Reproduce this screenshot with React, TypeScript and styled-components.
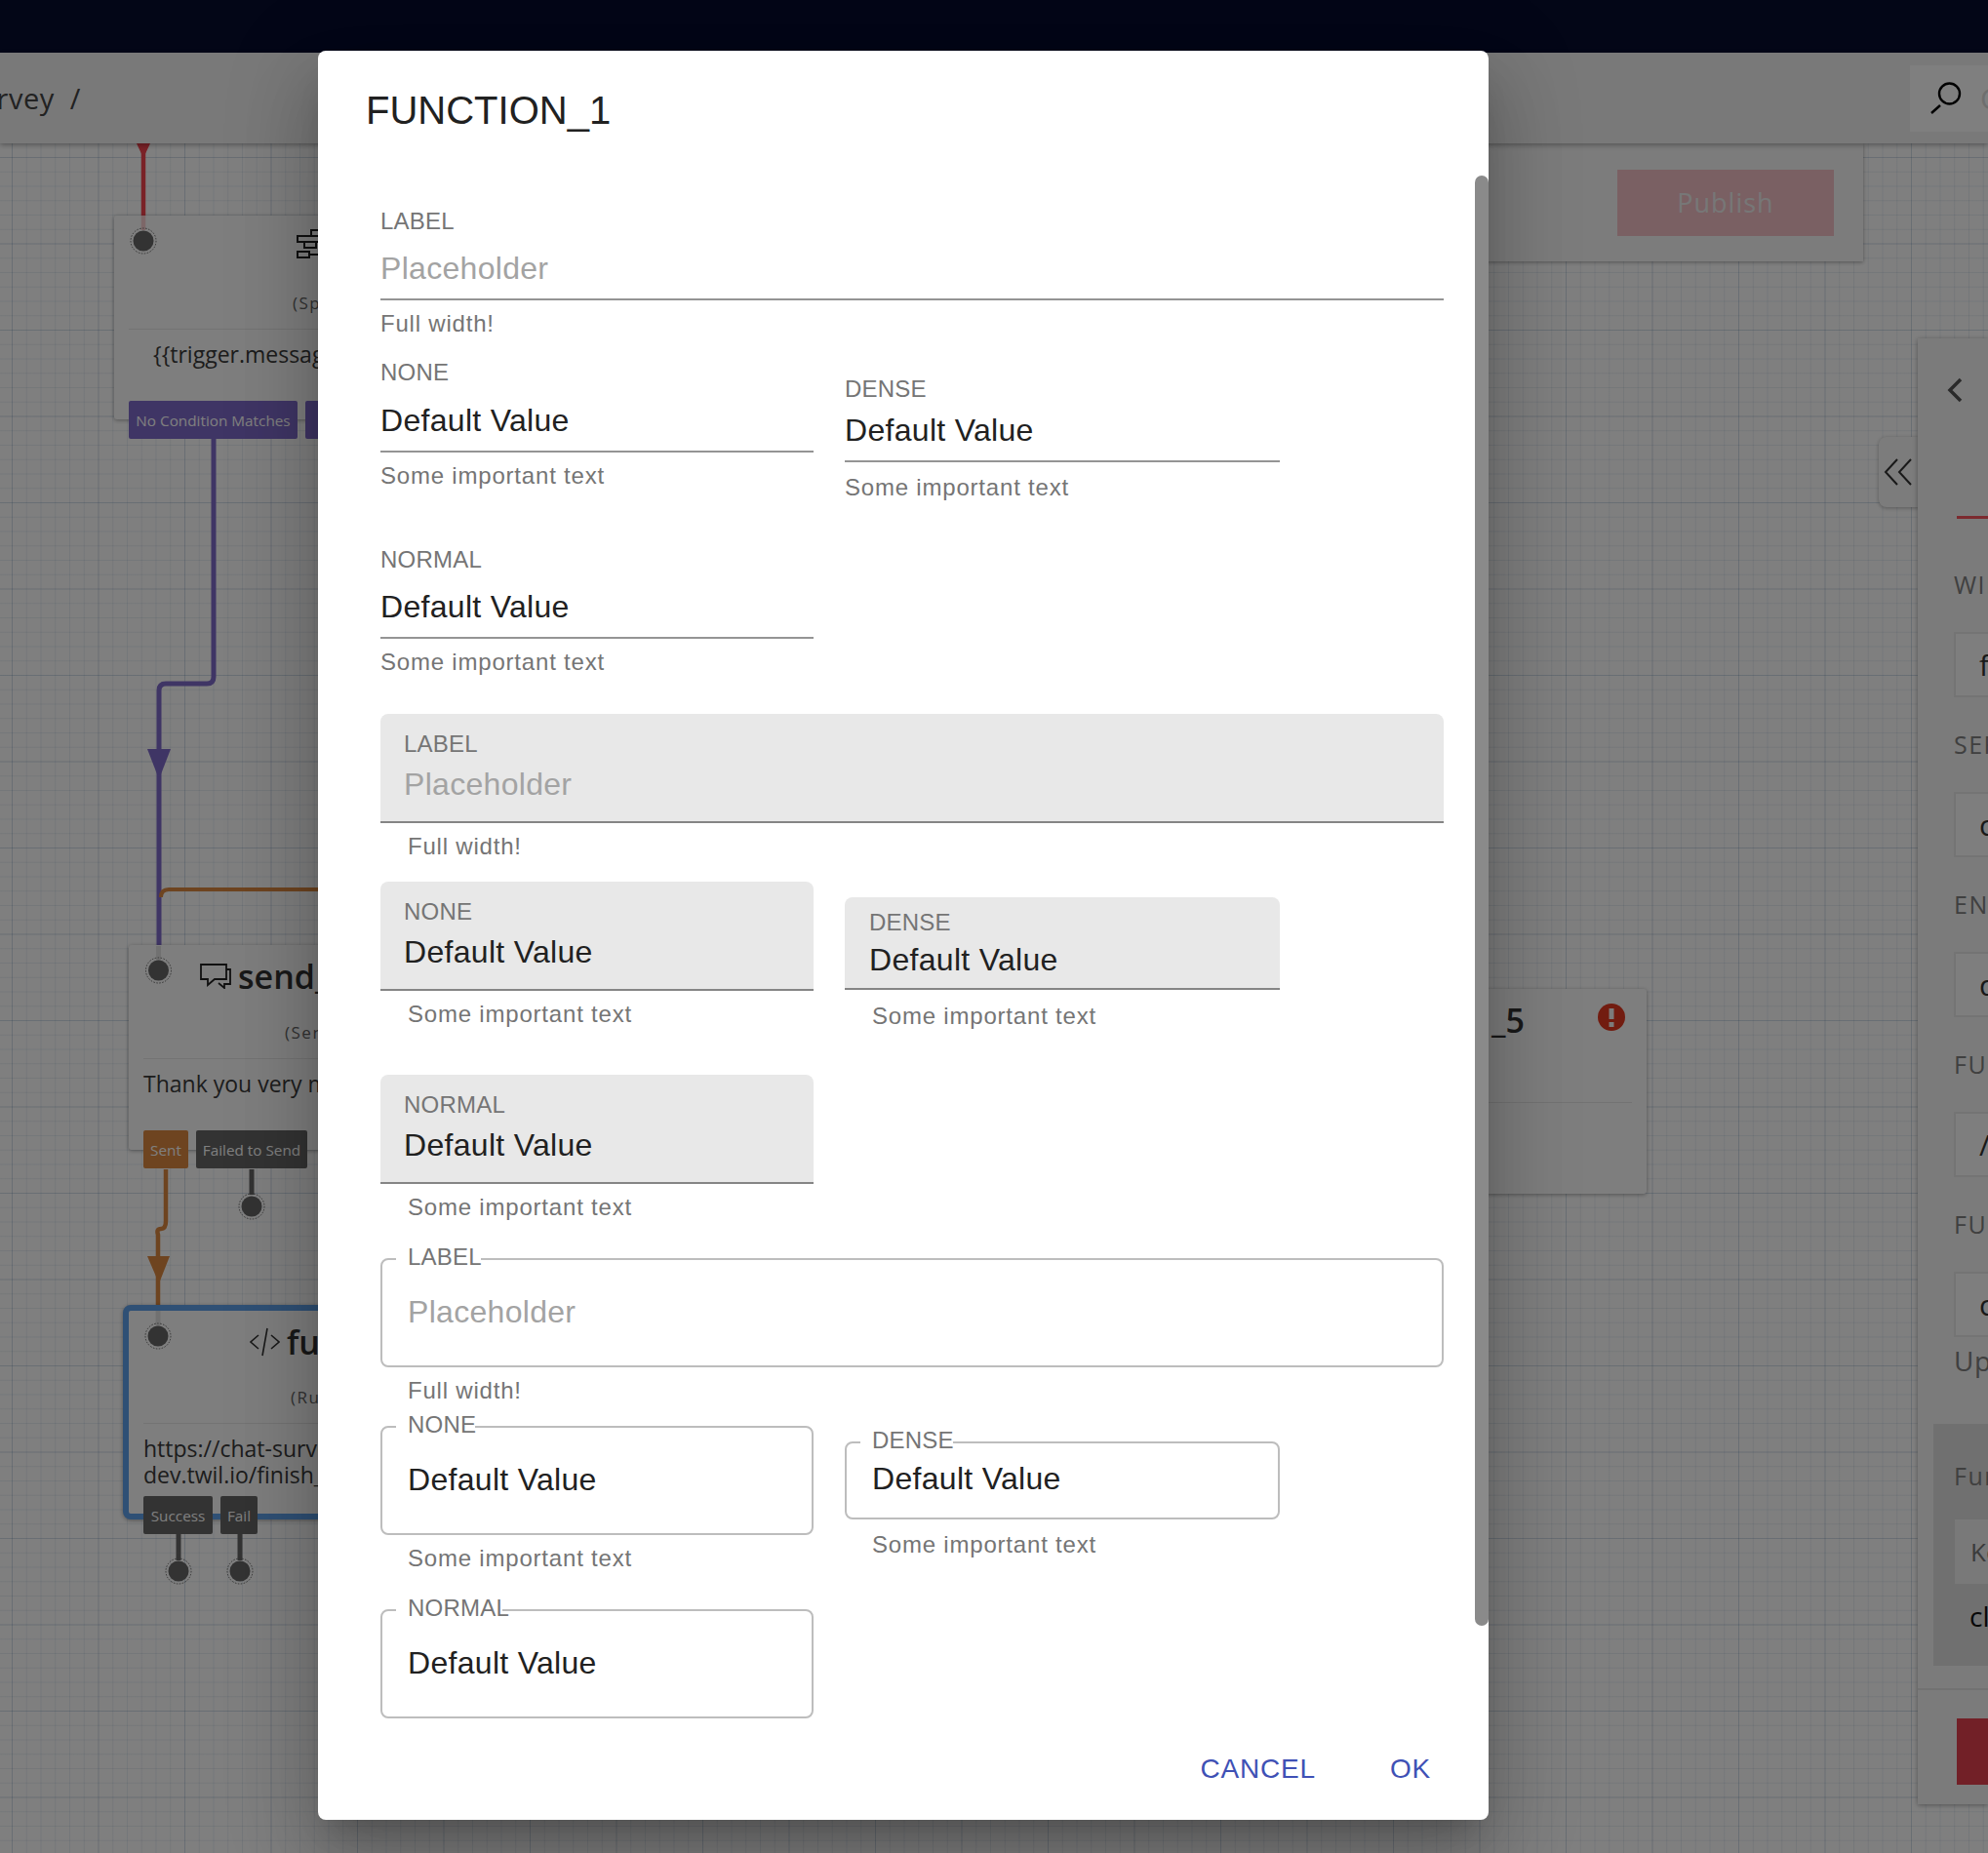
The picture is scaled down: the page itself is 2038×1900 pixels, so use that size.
import styled, { createGlobalStyle, css } from "styled-components";

const CANVAS_TOP = 147;

const GlobalStyle = createGlobalStyle`
  html, body {
    margin: 0;
    padding: 0;
    background: #ffffff;
  }
  * {
    box-sizing: border-box;
  }
`;

// ===== page behind the dialog =====

const Page = styled.div`
  position: relative;
  width: 2038px;
  height: 1900px;
  overflow: hidden;
  display: flex;
  flex-direction: column;
  font-family: "Open Sans", "Liberation Sans", sans-serif;
  color: #3a3a3a;
`;

const TopBar = styled.div`
  flex: 0 0 54px;
  background: #060c2e;
`;

const Header = styled.header`
  position: relative;
  z-index: 3;
  flex: 0 0 93px;
  display: flex;
  align-items: center;
  justify-content: space-between;
  background: #f2f2f2;
  box-shadow: 0 2px 5px rgba(0, 0, 0, 0.3);
`;

const Crumb = styled.div`
  margin-left: -36px;
  font-size: 29px;
  letter-spacing: 0.5px;
  white-space: pre;
  color: #444444;
`;

const SearchBox = styled.div`
  width: 80px;
  height: 68px;
  flex: none;
  display: flex;
  align-items: center;
  padding-left: 21px;
  gap: 19px;
  background: #ffffff;
  font-size: 30px;
  color: #dddddd;
  overflow: hidden;

  svg {
    flex: none;
  }
`;

const Canvas = styled.main`
  position: relative;
  flex: 1;
  background-color: #ffffff;
  background-image: linear-gradient(rgba(90, 130, 170, 0.17) 1px, transparent 1px),
    linear-gradient(90deg, rgba(90, 130, 170, 0.17) 1px, transparent 1px),
    linear-gradient(rgba(90, 130, 170, 0.12) 1px, transparent 1px),
    linear-gradient(90deg, rgba(90, 130, 170, 0.12) 1px, transparent 1px);
  background-size: 88.5px 88.5px, 88.5px 88.5px, 14.75px 14.75px, 14.75px 14.75px;
  background-position: 12px 14px, 12px 14px, 12px 14px, 12px 14px;
`;

const Wires = styled.svg`
  position: absolute;
  inset: 0;
  z-index: 1;
`;

const WiresOver = styled(Wires)`
  z-index: 3;
`;

const FlowNode = styled.div<{ $x: number; $y: number; $w: number; $h: number; $selected?: boolean }>`
  position: absolute;
  z-index: 2;
  left: ${({ $x }) => $x}px;
  top: ${({ $y }) => $y - CANVAS_TOP}px;
  width: ${({ $w }) => $w}px;
  height: ${({ $h }) => $h}px;
  background: #fdfdfd;
  box-shadow: 0 1px 4px rgba(0, 0, 0, 0.35);
  border-radius: 3px;

  ${({ $selected }) =>
    $selected &&
    css`
      border: 6px solid #5fa0ea;
      border-radius: 8px;
    `}
`;

const NodeHead = styled.div<{ $pad: number; $height: number }>`
  display: flex;
  align-items: center;
  gap: 7px;
  height: ${({ $height }) => $height}px;
  padding-left: ${({ $pad }) => $pad}px;
  font-size: 34px;
  font-weight: 600;
  color: #333333;
  white-space: nowrap;
`;

const NodeSub = styled.div<{ $pad: number; $top: number }>`
  height: 38px;
  margin-top: ${({ $top }) => $top}px;
  padding-left: ${({ $pad }) => $pad}px;
  font-size: 17px;
  letter-spacing: 1.5px;
  color: #666666;
  white-space: nowrap;
`;

const NodeRule = styled.div<{ $left: number; $right?: number }>`
  height: 1px;
  margin-left: ${({ $left }) => $left}px;
  margin-right: ${({ $right }) => $right ?? 0}px;
  background: #e6e6e6;
`;

const NodeBody = styled.div<{ $left: number }>`
  padding: 12px 0 0 ${({ $left }) => $left}px;
  font-size: 23px;
  line-height: 27px;
  color: #3a3a3a;
  white-space: nowrap;
`;

const TagRow = styled.div<{ $left: number; $top: number }>`
  position: absolute;
  left: ${({ $left }) => $left}px;
  top: ${({ $top }) => $top}px;
  display: flex;
  gap: 8px;
`;

const Tag = styled.div<{ $bg: string; $w: number }>`
  width: ${({ $w }) => $w}px;
  height: 39px;
  flex: none;
  display: flex;
  align-items: center;
  justify-content: center;
  border-radius: 2px;
  background: ${({ $bg }) => $bg};
  font-size: 15.3px;
  color: #ffffff;
  white-space: nowrap;
  overflow: hidden;
`;

const ErrorBadge = styled.svg`
  position: absolute;
  right: 22px;
  top: 15px;
`;

const PublishPanel = styled.div`
  position: absolute;
  z-index: 2;
  right: 128px;
  top: 0;
  width: 500px;
  height: 121px;
  display: flex;
  align-items: center;
  justify-content: flex-end;
  padding-right: 30px;
  background: #f8f8f8;
  box-shadow: 0 1px 4px rgba(0, 0, 0, 0.35);
`;

const PublishButton = styled.div`
  width: 222px;
  height: 68px;
  display: flex;
  align-items: center;
  justify-content: center;
  background: #f4c0c6;
  color: #efefef;
  font-size: 27px;
  letter-spacing: 1px;
`;

const CollapseTab = styled.div`
  position: absolute;
  z-index: 2;
  left: 1926px;
  top: ${448 - CANVAS_TOP}px;
  width: 42px;
  height: 72px;
  display: flex;
  align-items: center;
  padding-left: 5px;
  background: #f8f8f8;
  border-radius: 8px 0 0 8px;
  box-shadow: 0 1px 4px rgba(0, 0, 0, 0.3);
`;

const SidePanel = styled.aside`
  position: absolute;
  z-index: 3;
  left: 1966px;
  top: ${347 - CANVAS_TOP}px;
  width: 72px;
  height: 1503px;
  display: flex;
  flex-direction: column;
  background: #f6f6f6;
  box-shadow: 0 1px 5px rgba(0, 0, 0, 0.35);
  overflow: hidden;
`;

const BackRow = styled.div`
  height: 182px;
  padding: 40px 0 0 30px;
`;

const TabLine = styled.div`
  height: 3px;
  margin: 0 0 0 40px;
  background: #f8545e;
`;

const PanelFields = styled.div`
  padding: 49px 0 0 37px;
`;

const PanelLabel = styled.div<{ $gap?: number }>`
  height: 36px;
  line-height: 36px;
  font-size: 25px;
  letter-spacing: 1.5px;
  color: #808080;
  white-space: nowrap;
  margin-bottom: ${({ $gap }) => $gap ?? 31}px;
`;

const PanelInput = styled.div`
  width: 80px;
  height: 67px;
  margin-bottom: 30px;
  padding-left: 24px;
  display: flex;
  align-items: center;
  border: 2px solid #e9e9e9;
  background: #fcfcfc;
  font-size: 30px;
  color: #333333;
`;

const PanelHint = styled(PanelLabel)`
  margin: -24px 0 0;
  letter-spacing: 0.5px;
  font-size: 28px;
`;

const FunctionBox = styled.div`
  margin: 47px 0 0 16px;
  height: 248px;
  padding: 35px 0 0 21px;
  background: #e0e0e0;
`;

const KeyBox = styled.div`
  height: 66px;
  margin: 27px 0 14px 1px;
  padding-left: 16px;
  display: flex;
  align-items: center;
  background: #f2f2f2;
  font-size: 26px;
  color: #777777;
`;

const FunctionValue = styled.div`
  padding-left: 16px;
  font-size: 28px;
  color: #111111;
`;

const PanelFooter = styled.div`
  margin-top: 23px;
  border-top: 2px solid #e4e4e4;
  padding: 29px 0 0 40px;
`;

const DeleteButton = styled.div`
  height: 68px;
  background: #e5404e;
`;

// ===== dialog =====

const Backdrop = styled.div`
  position: absolute;
  inset: 0;
  z-index: 10;
  padding: 52px 0 0 326px;
  background: rgba(0, 0, 0, 0.5);
`;

const Dialog = styled.div`
  position: relative;
  width: 1200px;
  height: 1814px;
  display: flex;
  flex-direction: column;
  background: #ffffff;
  border-radius: 8px;
  box-shadow: 0 22px 30px -14px rgba(0, 0, 0, 0.2), 0 48px 76px 6px rgba(0, 0, 0, 0.14),
    0 18px 92px 16px rgba(0, 0, 0, 0.12);
  font-family: "Liberation Sans", Arial, sans-serif;
`;

const ScrollThumb = styled.div`
  position: absolute;
  right: 0;
  top: 128px;
  width: 14px;
  height: 1487px;
  border-radius: 7px;
  background: #8a8a8a;
`;

const DialogTitle = styled.h2`
  margin: 0;
  padding: 37px 0 0 49px;
  font-size: 40px;
  line-height: 48px;
  font-weight: 400;
  color: #212121;
`;

const DialogBody = styled.div`
  flex: 1;
  padding: 76px 0 0 64px;
`;

const FieldRow = styled.div<{ $top: number }>`
  display: flex;
  align-items: flex-start;
  gap: 32px;
  margin-top: ${({ $top }) => $top}px;
`;

const FieldRoot = styled.div<{ $width: number; $top?: number }>`
  width: ${({ $width }) => $width}px;
  margin-top: ${({ $top }) => $top ?? 0}px;
  flex: none;
`;

const StandardLabel = styled.div`
  height: 28px;
  line-height: 28px;
  font-size: 24px;
  letter-spacing: 0.22px;
  color: #757575;
`;

const ValueText = styled.div<{ $empty?: boolean }>`
  height: 38px;
  line-height: 38px;
  font-size: 32px;
  letter-spacing: 0.3px;
  color: ${({ $empty }) => ($empty ? "#a3a3a3" : "#212121")};
`;

const StandardInput = styled.div<{ $top: number }>`
  margin-top: ${({ $top }) => $top}px;
  padding-bottom: 12px;
  border-bottom: 2px solid #949494;
`;

const FilledBox = styled.div<{ $dense?: boolean }>`
  padding: ${({ $dense }) => ($dense ? "12px 0 10px 25px" : "17px 0 19px 24px")};
  background: #e8e8e8;
  border-radius: 8px 8px 0 0;
  border-bottom: 2px solid #858585;
`;

const FilledValue = styled.div<{ $dense?: boolean }>`
  margin-top: ${({ $dense }) => ($dense ? 5 : 8)}px;
`;

const OutlinedBox = styled.div<{ $dense?: boolean }>`
  position: relative;
  height: ${({ $dense }) => ($dense ? 80 : 112)}px;
  padding: ${({ $dense }) => ($dense ? "17px" : "34px")} 0 0 26px;
  border: 2px solid #bdbdbd;
  border-radius: 8px;
`;

const OutlineNotch = styled.span<{ $width: number }>`
  position: absolute;
  left: 14px;
  top: -2px;
  width: ${({ $width }) => $width}px;
  height: 2px;
  background: #ffffff;
`;

const OutlineLabel = styled(StandardLabel)`
  position: absolute;
  left: 26px;
  top: -17px;
`;

const HelperText = styled.div<{ $inset?: boolean; $top: number }>`
  height: 28px;
  line-height: 28px;
  margin-top: ${({ $top }) => $top}px;
  padding-left: ${({ $inset }) => ($inset ? 28 : 0)}px;
  font-size: 24px;
  letter-spacing: 0.8px;
  color: #757575;
`;

const DialogActions = styled.div`
  display: flex;
  justify-content: flex-end;
  gap: 76px;
  padding: 0 59px 36px 0;
`;

const ActionButton = styled.div`
  font-size: 28px;
  line-height: 32px;
  letter-spacing: 0.8px;
  color: #3f51b5;
`;

// ===== field helpers =====

type FieldProps = {
  label: string;
  value?: string;
  placeholder?: string;
  helper: string;
  width: number;
  top?: number;
};

function StandardField({
  label,
  value,
  placeholder,
  helper,
  width,
  top,
  valueTop,
  helperTop,
}: FieldProps & { valueTop: number; helperTop: number }) {
  return (
    <FieldRoot $width={width} $top={top}>
      <StandardLabel>{label}</StandardLabel>
      <StandardInput $top={valueTop}>
        <ValueText $empty={!value}>{value ?? placeholder}</ValueText>
      </StandardInput>
      <HelperText $top={helperTop}>{helper}</HelperText>
    </FieldRoot>
  );
}

function FilledField({
  label,
  value,
  placeholder,
  helper,
  width,
  top,
  dense,
}: FieldProps & { dense?: boolean }) {
  return (
    <FieldRoot $width={width} $top={top}>
      <FilledBox $dense={dense}>
        <StandardLabel>{label}</StandardLabel>
        <FilledValue $dense={dense}>
          <ValueText $empty={!value}>{value ?? placeholder}</ValueText>
        </FilledValue>
      </FilledBox>
      <HelperText $inset $top={dense ? 13 : 10}>
        {helper}
      </HelperText>
    </FieldRoot>
  );
}

function OutlinedField({
  label,
  value,
  placeholder,
  helper,
  width,
  top,
  dense,
  notch,
  helperTop,
}: Omit<FieldProps, "helper"> & {
  helper?: string;
  dense?: boolean;
  notch: number;
  helperTop?: number;
}) {
  return (
    <FieldRoot $width={width} $top={top}>
      <OutlinedBox $dense={dense}>
        <OutlineNotch $width={notch} />
        <OutlineLabel>{label}</OutlineLabel>
        <ValueText $empty={!value}>{value ?? placeholder}</ValueText>
      </OutlinedBox>
      {helper && (
        <HelperText $inset $top={helperTop ?? 10}>
          {helper}
        </HelperText>
      )}
    </FieldRoot>
  );
}

// ===== drawings =====

function SearchGlyph() {
  return (
    <svg width="32" height="33" viewBox="0 0 32 33" fill="none" stroke="#000" strokeWidth="2.4">
      <circle cx="19.5" cy="12" r="10.5" />
      <path d="M1 32l9-8" />
    </svg>
  );
}

function SplitGlyph() {
  return (
    <svg width="28" height="32" viewBox="0 0 28 32" fill="none" stroke="#222" strokeWidth="2">
      <path d="M15 1h13v6H15zM1 7h27v6H1zM8 13h12v6H8zM1 23h12v6H1zM13 26h15" />
    </svg>
  );
}

function MessageGlyph() {
  return (
    <svg width="32" height="26" viewBox="0 0 32 26" fill="none" stroke="#222" strokeWidth="1.8">
      <path d="M1 1h26v15H15l-7 6v-6H1z" />
      <path d="M27 6h4v15h-6v4l-6-5" />
    </svg>
  );
}

function CodeGlyph() {
  return (
    <svg width="31" height="30" viewBox="0 0 31 30" fill="none" stroke="#333" strokeWidth="1.6">
      <path d="M9 8L1 15l8 7M22 8l8 7-8 7M18 1l-5 28" />
    </svg>
  );
}

function Chevron() {
  return (
    <svg width="16" height="26" viewBox="0 0 16 26" fill="none" stroke="#555" strokeWidth="3.5">
      <path d="M14 2L3 13l11 11" />
    </svg>
  );
}

function DoubleChevron() {
  return (
    <svg width="30" height="30" viewBox="0 0 30 30" fill="none" stroke="#333" strokeWidth="2">
      <path d="M14 2L2 15l12 13M28 2L16 15l12 13" />
    </svg>
  );
}

function Port({ x, y }: { x: number; y: number }) {
  return (
    <g>
      <circle cx={x} cy={y} r="13" fill="none" stroke="#666" strokeWidth="1" strokeDasharray="1.5 1.5" />
      <circle cx={x} cy={y} r="10.5" fill="#666666" />
    </g>
  );
}

const PURPLE = "#7e6aca";
const ORANGE = "#dd8840";
const RED = "#f4444f";
const DARK = "#666666";

function WiresBelow() {
  return (
    <Wires width="2038" height="1753" viewBox={`0 ${CANVAS_TOP} 2038 1753`} fill="none">
      <path d="M147 155V222" stroke={RED} strokeWidth="4.5" />
      <path d="M140 147h14l-7 15z" fill={RED} />
      <path d="M219 450V694q0 7-7 7h-42q-7 0-7 7V972" stroke={PURPLE} strokeWidth="5" />
      <path d="M151 768h24l-12 31z" fill={PURPLE} />
      <path d="M165 920q0-8 8-8H330" stroke={ORANGE} strokeWidth="4" />
      <path d="M170 1199V1252q0 8-5 8t-3 6V1340" stroke={ORANGE} strokeWidth="4.5" />
      <path d="M151 1288h23l-11 28z" fill={ORANGE} />
      <path d="M258 1199V1225" stroke={DARK} strokeWidth="5" />
      <path d="M183 1572V1600M246 1572V1600" stroke={DARK} strokeWidth="5" />
      <Port x={258} y={1237} />
      <Port x={183} y={1611} />
      <Port x={246} y={1611} />
    </Wires>
  );
}

function WiresAbove() {
  return (
    <WiresOver width="2038" height="1753" viewBox={`0 ${CANVAS_TOP} 2038 1753`} fill="none">
      <path d="M147 221V236" stroke={RED} strokeWidth="4.5" opacity="0.25" />
      <path d="M162.5 970V986M162 1344V1360" stroke="#999" strokeWidth="5" opacity="0.25" />
      <Port x={147} y={247} />
      <Port x={162.5} y={995} />
      <Port x={162} y={1370} />
    </WiresOver>
  );
}

export default function App() {
  return (
    <Page>
      <GlobalStyle />
      <TopBar />
      <Header>
        <Crumb>survey  /</Crumb>
        <SearchBox>
          <SearchGlyph />C
        </SearchBox>
      </Header>

      <Canvas>
        <WiresBelow />

        <FlowNode $x={117} $y={221} $w={420} $h={209}>
          <NodeHead $pad={187} $height={60}>
            <SplitGlyph />
          </NodeHead>
          <NodeSub $pad={183} $top={18}>
            (Split Based On...)
          </NodeSub>
          <NodeRule $left={15} />
          <NodeBody $left={40}>{"{{trigger.message.Body}}"}</NodeBody>
          <TagRow $left={15} $top={190}>
            <Tag $bg={PURPLE} $w={173}>No Condition Matches</Tag>
            <Tag $bg={PURPLE} $w={120}>If value</Tag>
          </TagRow>
        </FlowNode>

        <FlowNode $x={132} $y={969} $w={420} $h={210}>
          <NodeHead $pad={73} $height={64}>
            <MessageGlyph />
            send_
          </NodeHead>
          <NodeSub $pad={160} $top={14}>
            (Send Message)
          </NodeSub>
          <NodeRule $left={15} />
          <NodeBody $left={15}>Thank you very much</NodeBody>
          <TagRow $left={15} $top={190}>
            <Tag $bg={ORANGE} $w={46}>Sent</Tag>
            <Tag $bg={DARK} $w={114}>Failed to Send</Tag>
          </TagRow>
        </FlowNode>

        <FlowNode $x={126} $y={1338} $w={430} $h={220} $selected>
          <NodeHead $pad={124} $height={64}>
            <CodeGlyph />
            fu
          </NodeHead>
          <NodeSub $pad={166} $top={13}>
            (Run Function)
          </NodeSub>
          <NodeRule $left={15} />
          <NodeBody $left={15}>
            https://chat-survey-
            <br />
            dev.twil.io/finish_
          </NodeBody>
          <TagRow $left={15} $top={190}>
            <Tag $bg={DARK} $w={71}>Success</Tag>
            <Tag $bg={DARK} $w={38}>Fail</Tag>
          </TagRow>
        </FlowNode>

        <FlowNode $x={1300} $y={1014} $w={388} $h={210}>
          <NodeHead $pad={229} $height={64}>
            _5
          </NodeHead>
          <NodeSub $pad={80} $top={14}>
            (Run)
          </NodeSub>
          <NodeRule $left={15} $right={15} />
          <ErrorBadge width="28" height="28" viewBox="0 0 28 28">
            <circle cx="14" cy="14" r="14" fill="#e43820" />
            <path d="M11.5 5h5v11h-5zM11.5 19h5v5h-5z" fill="#f8f8f8" />
          </ErrorBadge>
        </FlowNode>

        <WiresAbove />

        <PublishPanel>
          <PublishButton>Publish</PublishButton>
        </PublishPanel>

        <CollapseTab>
          <DoubleChevron />
        </CollapseTab>

        <SidePanel>
          <BackRow>
            <Chevron />
          </BackRow>
          <TabLine />
          <PanelFields>
            <PanelLabel>WIDGET</PanelLabel>
            <PanelInput>f</PanelInput>
            <PanelLabel>SERVICE</PanelLabel>
            <PanelInput>c</PanelInput>
            <PanelLabel>ENV</PanelLabel>
            <PanelInput>d</PanelInput>
            <PanelLabel>FUNCTION</PanelLabel>
            <PanelInput>/</PanelInput>
            <PanelLabel>FUNCTION</PanelLabel>
            <PanelInput>c</PanelInput>
            <PanelHint>Update</PanelHint>
          </PanelFields>
          <FunctionBox>
            <PanelLabel $gap={0}>Function</PanelLabel>
            <KeyBox>Key</KeyBox>
            <FunctionValue>cl</FunctionValue>
          </FunctionBox>
          <PanelFooter>
            <DeleteButton />
          </PanelFooter>
        </SidePanel>
      </Canvas>

      <Backdrop>
        <Dialog>
          <ScrollThumb />
          <DialogTitle>FUNCTION_1</DialogTitle>
          <DialogBody>
            <StandardField
              label="LABEL"
              placeholder="Placeholder"
              helper="Full width!"
              width={1090}
              valueTop={15}
              helperTop={10}
            />
            <FieldRow $top={22}>
              <StandardField
                label="NONE"
                value="Default Value"
                helper="Some important text"
                width={444}
                valueTop={16}
                helperTop={10}
              />
              <StandardField
                label="DENSE"
                value="Default Value"
                helper="Some important text"
                width={446}
                top={17}
                valueTop={9}
                helperTop={12}
              />
            </FieldRow>
            <StandardField
              label="NORMAL"
              value="Default Value"
              helper="Some important text"
              width={444}
              top={46}
              valueTop={15}
              helperTop={10}
            />

            <FilledField
              label="LABEL"
              placeholder="Placeholder"
              helper="Full width!"
              width={1090}
              top={39}
            />
            <FieldRow $top={22}>
              <FilledField
                label="NONE"
                value="Default Value"
                helper="Some important text"
                width={444}
              />
              <FilledField
                label="DENSE"
                value="Default Value"
                helper="Some important text"
                width={446}
                top={16}
                dense
              />
            </FieldRow>
            <FilledField
              label="NORMAL"
              value="Default Value"
              helper="Some important text"
              width={444}
              top={46}
            />

            <OutlinedField
              label="LABEL"
              placeholder="Placeholder"
              helper="Full width!"
              width={1090}
              top={38}
              notch={87}
            />
            <FieldRow $top={22}>
              <OutlinedField
                label="NONE"
                value="Default Value"
                helper="Some important text"
                width={444}
                notch={81}
              />
              <OutlinedField
                label="DENSE"
                value="Default Value"
                helper="Some important text"
                width={446}
                top={16}
                dense
                notch={95}
                helperTop={12}
              />
            </FieldRow>
            <OutlinedField
              label="NORMAL"
              value="Default Value"
              width={444}
              top={38}
              notch={109}
            />
          </DialogBody>
          <DialogActions>
            <ActionButton>CANCEL</ActionButton>
            <ActionButton>OK</ActionButton>
          </DialogActions>
        </Dialog>
      </Backdrop>
    </Page>
  );
}
